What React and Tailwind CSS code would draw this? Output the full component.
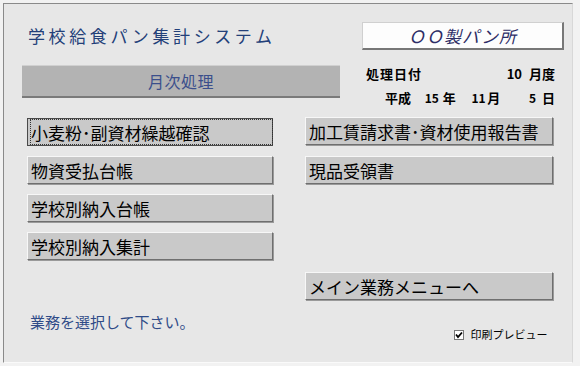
import React from "react";

const jp = { fontFamily: '"Noto Sans CJK JP", "Noto Sans", sans-serif' };

const MenuButton = ({ label, focused }) => (
  <button
    className={
      "h-[28px] w-full flex items-center pl-[3px] bg-[#c9c9c9] text-black text-[17px] leading-none text-left border " +
      (focused
        ? "border-[#4a4a4a]"
        : "border-t-[#f7f7f7] border-l-[#f7f7f7] border-r-[#6f6f6f] border-b-[#6f6f6f] shadow-[1px_1px_0_#9a9a9a]")
    }
    style={jp}
  >
    <span
      className={
        "h-[24px] flex items-center pr-1 " +
        (focused ? "outline outline-1 outline-dotted outline-[#333] w-full" : "")
      }
    >
      {label}
    </span>
  </button>
);

const App = () => {
  return (
    <div className="w-[580px] h-[366px] bg-[#f2f2f2] pt-[3px] pl-[3px]" style={jp}>
      <div className="w-[570px] h-[360px] bg-[#e7e7e7] border border-t-[#8a8a8a] border-l-[#8a8a8a] border-r-[#d8d8d8] border-b-[#fafafa] flex flex-col">
        {/* header */}
        <div className="flex items-center mt-[18px]">
          <div className="pl-[24px] flex-1 text-[17px] tracking-[3.6px] text-[#234079] leading-[20px]">
            学校給食パン集計システム
          </div>
          <div className="w-[202px] h-[28px] mr-[8px] bg-[#fdfdfd] border border-t-[#d0d0d0] border-l-[#d0d0d0] border-r-2 border-b-2 border-r-[#777] border-b-[#777] flex items-center justify-center italic text-[17px] tracking-[1px] text-[#2d2d66]">
            ＯＯ製パン所
          </div>
        </div>

        {/* monthly bar + date */}
        <div className="flex h-[33px] mt-[15px]">
          <div className="ml-[18px] w-[318px] h-[33px] bg-[#b3b3b3] border-t border-t-[#d0d0d0] border-b-2 border-b-[#7a7a7a] flex items-center justify-center text-[16px] text-[#3b4f8c] tracking-[0.5px]">
            月次処理
          </div>
          <div className="ml-[26px] w-[189px] pt-[1px] text-[13px] font-bold text-black leading-[16px]">
            <div className="flex justify-between">
              <span className="tracking-[1px]">処理日付</span>
              <span>
                10<span className="ml-[7px]">月度</span>
              </span>
            </div>
            <div className="flex mt-[8px] pl-[19px]">
              <span className="w-[40px]">平成</span>
              <span className="w-[18px] text-[12px]">15</span>
              <span className="w-[29px]">年</span>
              <span className="w-[16px] text-[12px]">11</span>
              <span className="w-[42px]">月</span>
              <span className="w-[13px] text-[12px]">5</span>
              <span>日</span>
            </div>
          </div>
        </div>

        {/* buttons */}
        <div className="flex mt-[20px]">
          <div className="ml-[23px] w-[246px] flex flex-col gap-[10px]">
            <MenuButton label="小麦粉･副資材繰越確認" focused />
            <MenuButton label="物資受払台帳" />
            <MenuButton label="学校別納入台帳" />
            <MenuButton label="学校別納入集計" />
          </div>
          <div className="ml-[32px] w-[248px] flex flex-col">
            <div className="-mt-[1px]">
              <MenuButton label="加工賃請求書･資材使用報告書" />
            </div>
            <div className="mt-[11px]">
              <MenuButton label="現品受領書" />
            </div>
            <div className="mt-[88px]">
              <MenuButton label="メイン業務メニューへ" />
            </div>
          </div>
        </div>

        {/* footer */}
        <div className="flex items-start mt-[12px]">
          <div className="ml-[26px] text-[15px] leading-[20px] text-[#2f4b88]">
            業務を選択して下さい。
          </div>
          <div className="ml-[259px] mt-[17px] flex items-center gap-[7px]">
            <div className="w-[10px] h-[10px] bg-white border border-[#777] flex items-center justify-center">
              <svg width="8" height="8" viewBox="0 0 8 8">
                <path d="M1 3.5 L3 6 L7 1.5" stroke="#000" strokeWidth="1.8" fill="none" />
              </svg>
            </div>
            <span className="text-[11px] leading-none text-black">印刷プレビュー</span>
          </div>
        </div>
      </div>
    </div>
  );
};

export default App;
